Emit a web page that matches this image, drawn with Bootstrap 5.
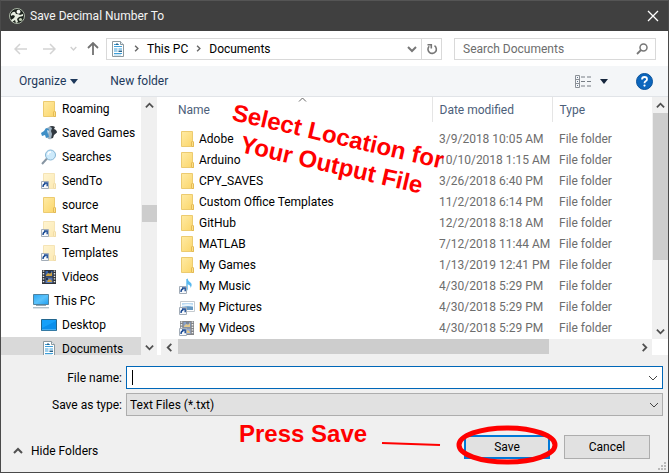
<!DOCTYPE html>
<html lang="en">
<head>
<meta charset="utf-8">
<meta name="viewport" content="width=device-width, initial-scale=1">
<title>Save Decimal Number To</title>
<link href="https://cdn.jsdelivr.net/npm/bootstrap@5.3.0/dist/css/bootstrap.min.css" rel="stylesheet">
<style>
  body { font-family: Roboto, "Open Sans", sans-serif; font-size: 12px; line-height: 16px; color: #000; }
  svg { display: block; flex: none; }
  button { font: inherit; color: inherit; }
  .dialog { height: 100vh; min-height: 400px; border: 1px solid #4a4a4a; border-top-color: #555; background: #f0f0f0; }
  .titlebar { height: 30px; background: #404040; color: #f4f4f4; padding: 0 9px 0 8px; gap: 5px; }
  .plain { border: 0; background: transparent; padding: 0; display: flex; align-items: center; }
  .addressbar { height: 35px; background: #fff; padding: 0 12px 0 13px; }
  .recent { margin-left: 14px; }
  .up { margin-left: 10px; }
  .field { height: 22px; border: 1px solid #d9d9d9; background: #fff; }
  .crumbs { margin-left: 7px; margin-right: 12px; padding-left: 3px; }
  .sep { margin: 0 7px; color: #666; }
  .refresh { width: 20px; height: 20px; border-left: 1px solid #d9d9d9; justify-content: center; }
  .search { width: 202px; padding: 0 7px 0 8px; }
  .search input { border: 0; outline: 0; padding: 0; min-width: 0; color: #6d6d6d; }
  .search input::placeholder { color: #6d6d6d; opacity: 1; }
  .commands { height: 31px; background: #f4f6f8; border-bottom: 1px solid #e1e4e8; padding: 0 15px 0 18px; color: #1e395b; }
  .main { min-height: 0; background: #fff; }
  .sidebar { width: 156px; }
  .tree { overflow: hidden; }
  .tree a { display: flex; align-items: center; gap: 5px; height: 24px; line-height: 12px; padding-left: 40px; color: #000; text-decoration: none; white-space: nowrap; }
  .tree a.root { padding-left: 32px; }
  .tree a.current { background: #d9d9d9; }
  .vbar { width: 16px; background: #f0f0f0; display: flex; flex-direction: column; align-items: center; }
  .vbar button, .hbar button { width: 16px; height: 16px; justify-content: center; flex: none; }
  .thumb { background: #cdcdcd; }
  .side-thumb { height: 17px; margin: 92px 0 auto; width: 15px; }
  .list-thumb { height: 147px; margin-bottom: auto; width: 15px; }
  .hbar { height: 16px; background: #f0f0f0; display: flex; margin-right: 16px; }
  .bottom-thumb { flex: 0 1 371px; height: 15px; margin: 0 auto 0 1px; }
  .files { margin-left: 4px; min-width: 0; }
  .files table { table-layout: fixed; width: 100%; margin: 0; white-space: nowrap; }
  .files col.name { width: 271px; }
  .files col.date { width: 120px; }
  .files th { height: 25px; padding: 0 7px; font-weight: 400; color: #4c607a; border-right: 1px solid #e5e5e5; }
  .files th:last-child { border-right: 0; }
  .files th:first-child { padding-left: 17px; }
  .files tbody::before { content: ""; display: block; height: 6px; }
  .files td { height: 21px; padding: 0 7px; color: #6d6d6d; }
  .files td:first-child { padding-left: 18px; color: #000; }
  .entry { display: flex; align-items: center; gap: 4px; }
  .sort { position: absolute; left: 137px; top: 0; }
  .note { position: absolute; overflow: visible; pointer-events: none; font: bold 24px "Liberation Sans", Arial, sans-serif; fill: #f00; }
  .where { left: 70px; top: 1px; }
  .ring { left: -9px; top: -11px; }
  .form-area { padding: 11px 5px 0 0; }
  .form-area label { width: 121px; flex: none; text-align: right; }
  .namebox { height: 23px; border: 1px solid #0067b8; background: #fff; }
  .namebox input { border: 0; outline: 0; padding: 0 8px; width: 100%; min-width: 0; }
  .caret { position: absolute; left: 5px; top: 3px; width: 1px; height: 15px; background: #000; }
  .typebox { height: 23px; border: 1px solid #adadad; border-radius: 0; color: #000; padding: 0 20px 0 3px; appearance: none; font-size: 12px;
    background: #e1e1e1 url("data:image/svg+xml,%3Csvg xmlns='http://www.w3.org/2000/svg' width='10' height='6'%3E%3Cpath d='M1 1l4 4 4-4' fill='none' stroke='%23444'/%3E%3C/svg%3E") no-repeat right 3px center; }
  .actions { height: 56px; padding: 19px 18px 0 12px; gap: 14px; }
  .action { width: 86px; height: 24px; border: 1px solid #adadad; background: #e1e1e1; padding: 0; }
  .action.default { border: 2px solid #0078d7; }
  .grip { position: absolute; right: 2px; bottom: 2px; }
</style>
</head>
<body>
<svg width="0" height="0" class="position-absolute" aria-hidden="true">
  <defs>
    <linearGradient id="fold" x2="1" y2="1"><stop offset="0" stop-color="#ffeba5"/><stop offset="1" stop-color="#fbd568"/></linearGradient>
    <linearGradient id="screen" x2="1" y2="1"><stop offset="0" stop-color="#2aa7f5"/><stop offset=".5" stop-color="#5cc3fb"/><stop offset="1" stop-color="#1e9df0"/></linearGradient>
    <symbol id="i-link" viewBox="0 0 16 16"><path d="M.5 8.500h7v7h-7z" fill="#f8fafc" stroke="#a3adb8"/><path d="M2 14q0-3 2.500-3.500M3 10h3.200v3.200" fill="none" stroke="#1b4b93" stroke-width="1.400"/></symbol>
    <symbol id="i-folder" viewBox="0 0 16 16"><path d="M2.500.5h11v10l1 .5v4.500h-12z" fill="url(#fold)" stroke="#eccb70"/><path d="M12.500 15v-4l1-1 1 1v4.500h-2" fill="#fbe08a" stroke="#dfb34a" stroke-width=".8"/></symbol>
    <symbol id="i-flink" viewBox="0 0 16 16"><g opacity=".5"><use href="#i-folder"/></g><use href="#i-link"/></symbol>
    <symbol id="i-games" viewBox="0 0 16 16"><path d="M8 2q3-2 6 0l-1 2q3 1 3 3.500L13 10l-1 3-4 1z" fill="#31383f"/><path d="M6 3q3-2 5 0l-1 3 1 3-1 5q-3 1-4-2z" fill="#9fb3c2"/><path d="M0 8l3-2 2-3 3 1-1 4 1 4-3 1-1-3-3 1z" fill="#3f8fc6"/><path d="M6 5l2 1-1 3z" fill="#d9eaf5"/></symbol>
    <symbol id="i-find" viewBox="0 0 16 16"><path d="M1 15l5-5.500" stroke="#8795a2" stroke-width="2"/><circle cx="9.500" cy="6" r="5" fill="#cdeafb" stroke="#85b5d4"/><path d="M7 6q0-3 3-3" fill="none" stroke="#fff" stroke-width="1.300"/></symbol>
    <symbol id="i-film" viewBox="0 0 16 16"><path d="M1 1h14v14H1z" fill="#30343a"/><path d="M2.500 1.500v13M13.500 1.500v13" stroke="#e6e8ea" stroke-width="1.500" stroke-dasharray="1.300 1.300"/><path d="M4.500 2h7v5.500h-7z" fill="#3863a8"/><path d="M4.500 8.500h7V14h-7z" fill="#5475b5"/><path d="M5 6l2-2 2 1 2-2v4H5zM6 13l1-2 2-1 2 2v1z" fill="#cfa23f"/><path d="M7 2h3v2H7zM5 9h2v2H5z" fill="#26354e"/></symbol>
    <symbol id="i-pc" viewBox="0 0 16 16"><path d="M.5 1.500h15v10H.5z" fill="url(#screen)" stroke="#51839f"/><path d="M3 12.500h10M0 14.800h16" stroke="#93a7b4"/></symbol>
    <symbol id="i-desk" viewBox="0 0 16 16"><path d="M.5 2.500h15v11H.5z" fill="#14a0fa" stroke="#23668e"/><path d="M1 11L15 4v9H1z" fill="#0a8fec"/><path d="M1 12.800h14" stroke="#7bcafb" stroke-width=".7"/></symbol>
    <symbol id="i-doc" viewBox="0 0 16 16"><path d="M2.500.5h8l3 3v12h-11z" fill="#fff" stroke="#8c999f"/><path d="M10.500.5v3h3" fill="#e5eef4" stroke="#8c999f"/><path d="M4 3.500h5M4 5.500h8M4 8h3.500M8.500 8h3.500M4 10h3.500M4 12.500h8" stroke="#3fa0d9"/><path d="M8.500 9.500H12V11H8.500zM6 2.500h2V4H6z" fill="#29638a"/><path d="M4 14h7" stroke="#a3cfe8"/></symbol>
    <symbol id="i-music" viewBox="0 0 16 16"><path d="M8 1v10" stroke="#64bdf0" stroke-width="1.500"/><path d="M8 0q1 3 4 5 1.500 2-.5 5 .5-3-3.500-4z" fill="#5ab9ef"/><ellipse cx="6.500" cy="11" rx="2.500" ry="2" fill="#7accf5"/><use href="#i-link"/></symbol>
    <symbol id="i-pics" viewBox="0 0 16 16"><path d="M1.500 2.500h14v10h-14z" fill="#fff" stroke="#c5cbd0"/><path d="M3 4h11v7H3z" fill="#bad9f2"/><path d="M3 9q4-3 11-1v3H3z" fill="#6598c2"/><path d="M3 6q6-2 11 0v1H3z" fill="#eaf5fc"/><use href="#i-link"/></symbol>
    <symbol id="i-vlink" viewBox="0 0 16 16"><g opacity=".6"><use href="#i-film"/></g><use href="#i-link"/></symbol>
    <symbol id="c-down" viewBox="0 0 10 10"><path d="M1 3l4 4 4-4" fill="none" stroke="currentColor" stroke-width="2"/></symbol>
    <symbol id="c-up" viewBox="0 0 10 10"><path d="M1 7l4-4 4 4" fill="none" stroke="currentColor" stroke-width="2"/></symbol>
    <symbol id="c-left" viewBox="0 0 10 10"><path d="M7 1L3 5l4 4" fill="none" stroke="currentColor" stroke-width="2"/></symbol>
    <symbol id="c-right" viewBox="0 0 10 10"><path d="M3 1l4 4-4 4" fill="none" stroke="currentColor" stroke-width="2"/></symbol>
  </defs>
</svg>

<div class="dialog d-flex flex-column position-relative overflow-hidden">
  <header class="titlebar d-flex align-items-center flex-shrink-0">
    <svg width="16" height="16" viewBox="0 0 16 16"><circle cx="8" cy="8" r="7.500" fill="#1c231d" stroke="#a9b5a4"/><circle cx="9.500" cy="3.800" r="2" fill="#f4f7ef"/><path d="M2 6q2-3 4-2l1 2q3 0 4 1l3-1v2l-4 1-2 2 1 3-2 1-1-3-3 2-1-2 3-2 1-2-2-1-2 1z" fill="#e7eee0"/><circle cx="11.500" cy="11.500" r="1.600" fill="#c0ceb3"/></svg>
    <span>Save Decimal Number To</span>
    <button type="button" class="plain ms-auto" aria-label="Close"><svg width="12" height="12" viewBox="0 0 12 12"><path d="M1 1l10 10M11 1L1 11" stroke="#fff" stroke-width="1.300"/></svg></button>
  </header>

  <nav class="addressbar d-flex align-items-center flex-shrink-0" aria-label="Location">
    <button type="button" class="plain" aria-label="Back"><svg width="13" height="12" viewBox="0 0 13 12"><path d="M6 1L1 6l5 5M1 6h12" fill="none" stroke="#d3d3d3" stroke-width="1.500"/></svg></button>
    <button type="button" class="plain ms-3" aria-label="Forward"><svg width="13" height="12" viewBox="0 0 13 12"><path d="M7 1l5 5-5 5M12 6H0" fill="none" stroke="#d3d3d3" stroke-width="1.500"/></svg></button>
    <button type="button" class="plain recent" aria-label="Recent locations"><svg width="7" height="7" color="#cfcfcf"><use href="#c-down"/></svg></button>
    <button type="button" class="plain up" aria-label="Up"><svg width="12" height="13" viewBox="0 0 12 13"><path d="M1 6l5-5 5 5M6 1v12" fill="none" stroke="#727272" stroke-width="1.800"/></svg></button>
    <div class="field crumbs d-flex align-items-center flex-grow-1">
      <svg width="16" height="16"><use href="#i-doc"/></svg>
      <svg width="7" height="7" class="sep"><use href="#c-right"/></svg>
      <a href="#" class="text-black text-decoration-none">This PC</a>
      <svg width="7" height="7" class="sep"><use href="#c-right"/></svg>
      <a href="#" class="text-black text-decoration-none">Documents</a>
      <button type="button" class="plain ms-auto me-1" aria-label="Previous locations"><svg width="10" height="10" color="#777"><use href="#c-down"/></svg></button>
      <button type="button" class="plain refresh" aria-label="Refresh"><svg width="12" height="12" viewBox="0 0 12 12"><path d="M8.500 2.700A4.200 4.200 0 1 1 3.200 3.200M1.500 1.700h3.800v3.800" fill="none" stroke="#777" stroke-width="1.600"/></svg></button>
    </div>
    <div class="field search d-flex align-items-center">
      <input type="search" class="flex-grow-1" placeholder="Search Documents" aria-label="Search Documents">
      <svg width="12" height="12" viewBox="0 0 12 12"><circle cx="7.500" cy="4.500" r="3.500" fill="none" stroke="#777" stroke-width="1.500"/><path d="M5 7L1 11" stroke="#777" stroke-width="1.800"/></svg>
    </div>
  </nav>

  <div class="commands d-flex align-items-center flex-shrink-0">
    <button type="button" class="plain">Organize<svg width="8" height="5" viewBox="0 0 8 5" class="ms-1"><path d="M0 0h8L4 5z" fill="#1e395b"/></svg></button>
    <button type="button" class="plain ms-4 ps-2">New folder</button>
    <button type="button" class="plain ms-auto" aria-label="Change view">
      <svg width="17" height="13" viewBox="0 0 17 13"><path d="M.5.5h4v12h-4zM.5 4.500h4M.5 8.500h4" fill="none" stroke="#8b9097"/><path d="M2 2.500h1M2 6.500h1M2 10.500h1" stroke="#5f7691"/><path d="M6 2h4M12 2h4M6 6.500h4M12 6.500h4M6 11h4M12 11h4" stroke="#777d84"/></svg>
      <svg width="8" height="5" viewBox="0 0 8 5" class="ms-2"><path d="M0 0h8L4 5z" fill="#16263d"/></svg>
    </button>
    <button type="button" class="plain ms-4 ps-1" aria-label="Help"><svg width="17" height="17" viewBox="0 0 17 17"><circle cx="8.500" cy="8.500" r="8" fill="#0c66bd" stroke="#0b539b"/><path d="M6 6.500Q6 4 8.500 4T11 6.200Q11 7.500 9.500 8.200 8.500 8.800 8.500 10.200" fill="none" stroke="#fff" stroke-width="1.800"/><circle cx="8.500" cy="12.600" r="1.100" fill="#fff"/></svg></button>
  </div>

  <div class="main d-flex flex-grow-1">
    <aside class="sidebar d-flex flex-shrink-0">
      <nav class="tree flex-grow-1" aria-label="Folders">
        <a href="#"><svg width="16" height="16"><use href="#i-folder"/></svg>Roaming</a>
        <a href="#"><svg width="16" height="16"><use href="#i-games"/></svg>Saved Games</a>
        <a href="#"><svg width="16" height="16"><use href="#i-find"/></svg>Searches</a>
        <a href="#"><svg width="16" height="16"><use href="#i-flink"/></svg>SendTo</a>
        <a href="#"><svg width="16" height="16"><use href="#i-folder"/></svg>source</a>
        <a href="#"><svg width="16" height="16"><use href="#i-flink"/></svg>Start Menu</a>
        <a href="#"><svg width="16" height="16"><use href="#i-flink"/></svg>Templates</a>
        <a href="#"><svg width="16" height="16"><use href="#i-film"/></svg>Videos</a>
        <a href="#" class="root"><svg width="16" height="16"><use href="#i-pc"/></svg>This PC</a>
        <a href="#"><svg width="16" height="16"><use href="#i-desk"/></svg>Desktop</a>
        <a href="#" class="current"><svg width="16" height="16"><use href="#i-doc"/></svg>Documents</a>
      </nav>
      <div class="vbar">
        <button type="button" class="plain" aria-label="Scroll up"><svg width="9" height="9" color="#505050"><use href="#c-up"/></svg></button>
        <div class="thumb side-thumb"></div>
        <button type="button" class="plain" aria-label="Scroll down"><svg width="9" height="9" color="#505050"><use href="#c-down"/></svg></button>
      </div>
    </aside>

    <section class="files d-flex flex-column flex-grow-1" aria-label="Files">
      <div class="d-flex flex-grow-1 overflow-hidden">
        <div class="flex-grow-1 position-relative">
          <svg class="sort" width="9" height="5" viewBox="0 0 9 5"><path d="M1 4.500L4.500 1 8 4.500" fill="none" stroke="#666"/></svg>
          <table>
            <colgroup><col class="name"><col class="date"><col></colgroup>
            <thead><tr><th>Name</th><th>Date modified</th><th>Type</th></tr></thead>
            <tbody>
              <tr><td><span class="entry"><svg width="16" height="16"><use href="#i-folder"/></svg>Adobe</span></td><td>3/9/2018 10:05 AM</td><td>File folder</td></tr>
              <tr><td><span class="entry"><svg width="16" height="16"><use href="#i-folder"/></svg>Arduino</span></td><td>10/10/2018 1:15 AM</td><td>File folder</td></tr>
              <tr><td><span class="entry"><svg width="16" height="16"><use href="#i-folder"/></svg>CPY_SAVES</span></td><td>3/26/2018 6:40 PM</td><td>File folder</td></tr>
              <tr><td><span class="entry"><svg width="16" height="16"><use href="#i-folder"/></svg>Custom Office Templates</span></td><td>11/2/2018 6:14 PM</td><td>File folder</td></tr>
              <tr><td><span class="entry"><svg width="16" height="16"><use href="#i-folder"/></svg>GitHub</span></td><td>12/2/2018 8:18 AM</td><td>File folder</td></tr>
              <tr><td><span class="entry"><svg width="16" height="16"><use href="#i-folder"/></svg>MATLAB</span></td><td>7/12/2018 11:44 AM</td><td>File folder</td></tr>
              <tr><td><span class="entry"><svg width="16" height="16"><use href="#i-folder"/></svg>My Games</span></td><td>1/13/2019 12:41 PM</td><td>File folder</td></tr>
              <tr><td><span class="entry"><svg width="16" height="16"><use href="#i-music"/></svg>My Music</span></td><td>4/30/2018 5:29 PM</td><td>File folder</td></tr>
              <tr><td><span class="entry"><svg width="16" height="16"><use href="#i-pics"/></svg>My Pictures</span></td><td>4/30/2018 5:29 PM</td><td>File folder</td></tr>
              <tr><td><span class="entry"><svg width="16" height="16"><use href="#i-vlink"/></svg>My Videos</span></td><td>4/30/2018 5:29 PM</td><td>File folder</td></tr>
            </tbody>
          </table>
          <svg class="note where" width="220" height="100"><g transform="rotate(13 0 22)"><text x="0" y="22">Select Location for</text><text x="15" y="51">Your Output File</text></g></svg>
        </div>
        <div class="vbar">
          <button type="button" class="plain" aria-label="Scroll up"><svg width="9" height="9" color="#505050"><use href="#c-up"/></svg></button>
          <div class="thumb list-thumb"></div>
          <button type="button" class="plain" aria-label="Scroll down"><svg width="9" height="9" color="#505050"><use href="#c-down"/></svg></button>
        </div>
      </div>
      <div class="hbar flex-shrink-0">
        <button type="button" class="plain" aria-label="Scroll left"><svg width="9" height="9" color="#505050"><use href="#c-left"/></svg></button>
        <div class="thumb bottom-thumb"></div>
        <button type="button" class="plain" aria-label="Scroll right"><svg width="9" height="9" color="#505050"><use href="#c-right"/></svg></button>
      </div>
    </section>
  </div>

  <form class="flex-shrink-0">
    <div class="form-area">
      <div class="d-flex align-items-center mb-1">
        <label for="fname" class="me-1">File name:</label>
        <div class="namebox d-flex align-items-center flex-grow-1 position-relative">
          <input id="fname" type="text">
          <span class="caret"></span>
          <button type="button" class="plain me-1" aria-label="Previous names"><svg width="10" height="6" viewBox="0 0 10 6"><path d="M1 1l4 4 4-4" fill="none" stroke="#444"/></svg></button>
        </div>
      </div>
      <div class="d-flex align-items-center">
        <label for="ftype" class="me-1">Save as type:</label>
        <select id="ftype" class="typebox flex-grow-1"><option>Text Files (*.txt)</option></select>
      </div>
    </div>
    <div class="actions d-flex align-items-start">
      <button type="button" class="plain mt-2 me-auto"><svg width="10" height="10" color="#505050" class="me-2"><use href="#c-up"/></svg>Hide Folders</button>
      <div class="position-relative">
        <button type="submit" class="action default">Save</button>
        <svg class="note ring" width="104" height="44"><ellipse cx="52" cy="21" rx="48" ry="17" fill="none" stroke="#f00" stroke-width="5"/><path d="M-73 19l58 2" stroke="#f00" stroke-width="2"/><text x="-216" y="18">Press Save</text></svg>
      </div>
      <button type="button" class="action">Cancel</button>
    </div>
  </form>
  <svg class="grip" width="8" height="8" viewBox="0 0 8 8" fill="#b9b9b9"><path d="M6 0h2v2H6zM3 3h2v2H3zM6 3h2v2H6zM0 6h2v2H0zM3 6h2v2H3zM6 6h2v2H6z"/></svg>
</div>
<script src="https://cdn.jsdelivr.net/npm/bootstrap@5.3.0/dist/js/bootstrap.bundle.min.js"></script>
</body>
</html>
